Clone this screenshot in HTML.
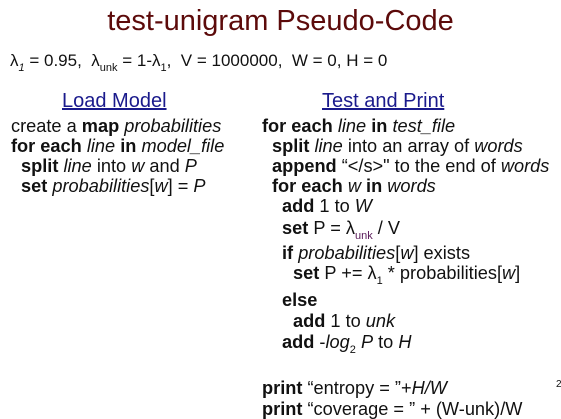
<!DOCTYPE html><html><head><style>
body{margin:0;width:561px;height:419px;background:#fff;font-family:"Liberation Sans",sans-serif;color:#111;position:relative;overflow:hidden}
div.l{position:absolute;font-size:18.2px;white-space:nowrap;line-height:20px}
b{font-weight:bold}
sub{font-size:11px;vertical-align:-5px;line-height:0}
.t{position:absolute;left:0;width:561px;text-align:center;top:5px;font-size:29px;color:#5c0a0a}
.h{position:absolute;font-size:20px;color:#1a1a8c;text-decoration:underline;white-space:nowrap}
.u{color:#5a1a5a}
</style></head><body>
<div class="t">test-unigram Pseudo-Code</div>
<div class="l" style="left:10px;top:51px;font-size:17px">λ<sub><i>1</i></sub> = 0.95,&nbsp; λ<sub>unk</sub> = 1-λ<sub>1</sub>,&nbsp; V = 1000000,&nbsp; W = 0, H = 0</div>
<div class="h" style="left:62px;top:90px">Load Model</div>
<div class="h" style="left:322px;top:90px">Test and Print</div>
<div class="l" style="left:11px;top:116px">create a <b>map</b> <i>probabilities</i></div>
<div class="l" style="left:11px;top:136px"><b>for each</b> <i>line</i> <b>in</b> <i>model_file</i></div>
<div class="l" style="left:21px;top:156px"><b>split</b> <i>line</i> into <i>w</i> and <i>P</i></div>
<div class="l" style="left:21px;top:176px"><b>set</b> <i>probabilities</i>[<i>w</i>] = <i>P</i></div>
<div class="l" style="left:262px;top:116px"><b>for each</b> <i>line</i> <b>in</b> <i>test_file</i></div>
<div class="l" style="left:272px;top:136px"><b>split</b> <i>line</i> into an array of <i>words</i></div>
<div class="l" style="left:272px;top:156px"><b>append</b> “&lt;/s&gt;" to the end of <i>words</i></div>
<div class="l" style="left:272px;top:176px"><b>for each</b> <i>w</i> <b>in</b> <i>words</i></div>
<div class="l" style="left:282px;top:196px"><b>add</b> 1 to <i>W</i></div>
<div class="l" style="left:282px;top:218px"><b>set</b> P = λ<sub class="u">unk</sub> / V</div>
<div class="l" style="left:282px;top:243px"><b>if</b> <i>probabilities</i>[<i>w</i>] exists</div>
<div class="l" style="left:293px;top:263px"><b>set</b> P += λ<sub>1</sub> * probabilities[<i>w</i>]</div>
<div class="l" style="left:282px;top:290px"><b>else</b></div>
<div class="l" style="left:293px;top:311px"><b>add</b> 1 to <i>unk</i></div>
<div class="l" style="left:282px;top:332px"><b>add</b> -<i>log</i><sub>2</sub> <i>P</i> to <i>H</i></div>
<div class="l" style="left:262px;top:378px"><b>print</b> “entropy = ”+<i>H/W</i></div>
<div class="l" style="left:262px;top:399px"><b>print</b> “coverage = ” + (W-unk)/W</div>
<div class="l" style="left:556px;top:375px;font-size:10px">2</div>
</body></html>
